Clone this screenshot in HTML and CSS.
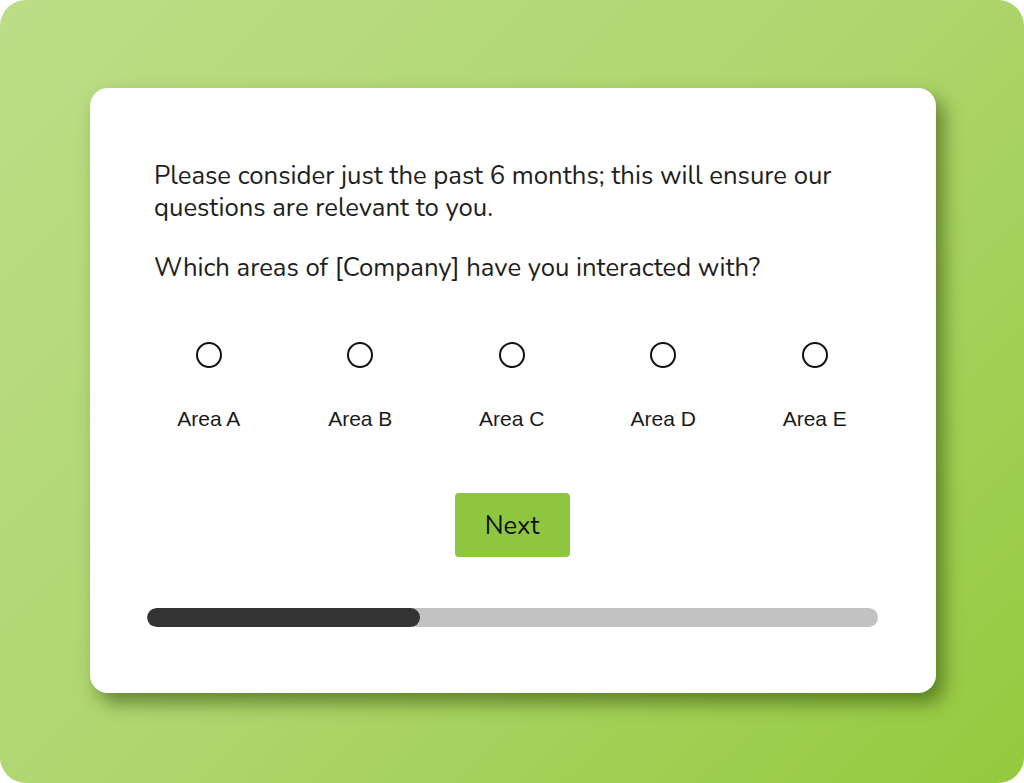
FILE: index.html
```html
<!DOCTYPE html>
<html>
<head>
<meta charset="utf-8">
<link rel="stylesheet" href="styles.css">
</head>
<body>
<div class="frame">
  <div class="card">
    <p class="question">Please consider just the past 6 months; this will ensure our questions are relevant to you.</p>
    <p class="question">Which areas of [Company] have you interacted with?</p>
    <div class="options">
      <label class="option"><span class="radio"></span><span class="label">Area A</span></label>
      <label class="option"><span class="radio"></span><span class="label">Area B</span></label>
      <label class="option"><span class="radio"></span><span class="label">Area C</span></label>
      <label class="option"><span class="radio"></span><span class="label">Area D</span></label>
      <label class="option"><span class="radio"></span><span class="label">Area E</span></label>
    </div>
    <div class="actions"><button class="next">Next</button></div>
    <div class="progress"><div class="fill" style="width:37.4%"></div></div>
  </div>
</div>
</body>
</html>
```

FILE: styles.css
```css
html, body {
  margin: 0;
  padding: 0;
  background: #ffffff;
}
.frame {
  width: 1024px;
  height: 783px;
  box-sizing: border-box;
  border-radius: 26px;
  background: linear-gradient(135deg, #bcdd86 0%, #aed66e 50%, #95c93d 100%);
  padding: 88px 88px 90px 90px;
}
.card {
  height: 605px;
  box-sizing: border-box;
  background: #ffffff;
  border-radius: 18px;
  box-shadow: 8px 10px 18px rgba(50, 80, 10, 0.6);
  padding: 72px 58px 0 64px;
  font-family: "Nunito", "Open Sans", "Lato", sans-serif;
  color: #1e1e1e;
}
.question {
  margin: 0 0 28px 0;
  font-size: 25.7px;
  line-height: 32px;
}
.options {
  display: grid;
  grid-template-columns: repeat(5, 151.5px);
  margin: 58px 0 0 -21px;
}
.option {
  display: flex;
  flex-direction: column;
  align-items: center;
}
.radio {
  width: 22px;
  height: 22px;
  border: 2px solid #111;
  border-radius: 50%;
}
.label {
  margin-top: 39px;
  font-family: "Liberation Sans", Arial, sans-serif;
  font-size: 21px;
  color: #1a1a1a;
}
.actions {
  display: flex;
  justify-content: center;
  margin: 62px 0 0 0;
  padding-right: 8px;
}
.next {
  width: 115px;
  height: 64px;
  border: none;
  border-radius: 4px;
  background: #8fc640;
  font-family: "Nunito", "Open Sans", "Lato", sans-serif;
  font-size: 25.5px;
  color: #111;
}
.progress {
  margin: 51px 0 0 -7px;
  width: 731px;
  height: 19px;
  border-radius: 10px;
  background: #c2c2c2;
  overflow: hidden;
}
.fill {
  height: 100%;
  background: #333333;
  border-radius: 10px;
}
```
